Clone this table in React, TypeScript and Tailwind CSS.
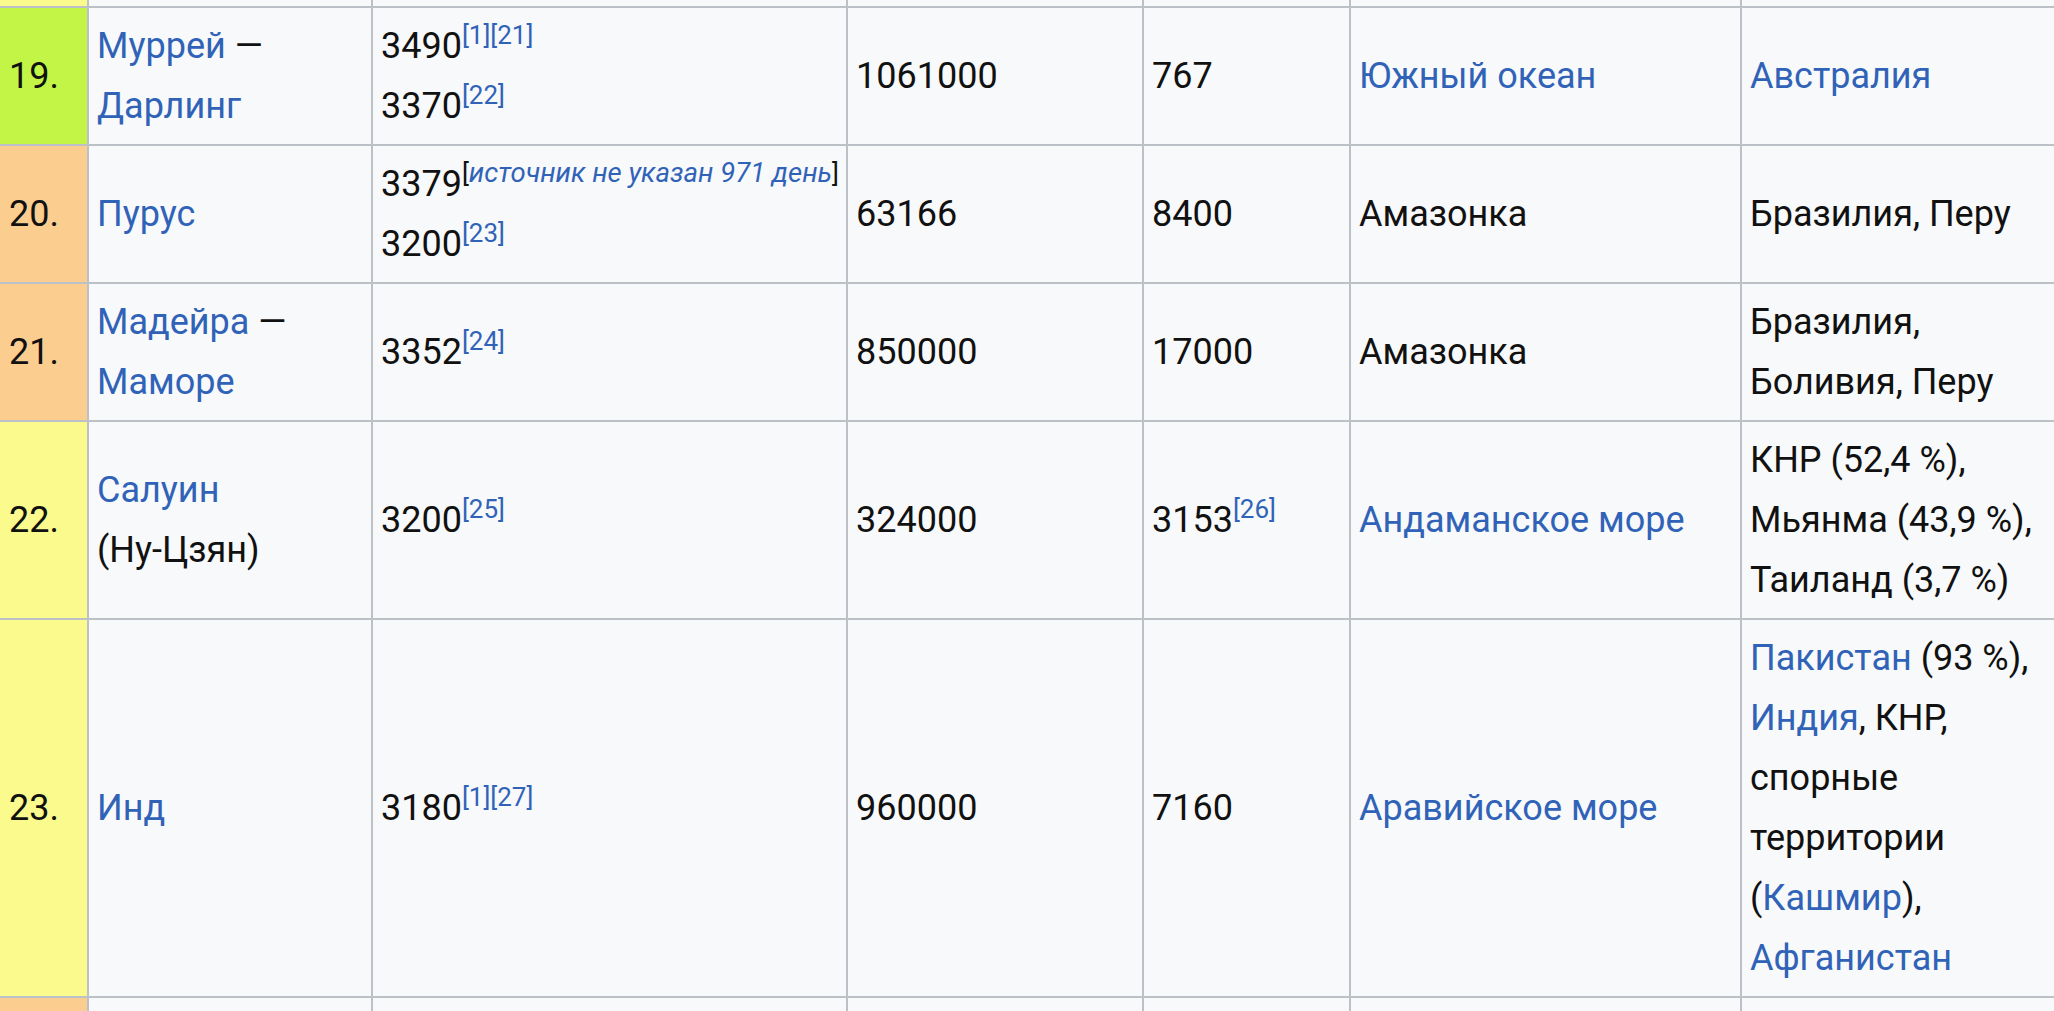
import { ReactNode } from "react"
import { twMerge } from "tailwind-merge"

// colours used by the wiki table for the continent column
const LIME = "bg-[#c2f545]"
const ORANGE = "bg-[#fbcd8e]"
const YELLOW = "bg-[#fbfa8c]"

function Cell({
  children,
  className,
}: {
  children?: ReactNode
  className?: string
}) {
  return (
    <div className={twMerge("flex items-center bg-[#f8f9fa] px-2 py-2", className)}>
      <div>{children}</div>
    </div>
  )
}

function WikiLink({ children }: { children: ReactNode }) {
  return <a className="text-[#3063b8]">{children}</a>
}

function Ref({ children }: { children: ReactNode }) {
  return <sup className="-top-[14px] text-[26px] text-[#3063b8]">{children}</sup>
}

function Num({ n, color }: { n: string; color: string }) {
  return <Cell className={twMerge("pl-[9px]", color)}>{n}</Cell>
}

export default function App() {
  return (
    <main className="h-screen w-full overflow-hidden bg-[#f8f9fa] font-[Roboto,sans-serif] text-[36px] leading-[60px] text-[#111]">
      <div className="grid w-max grid-cols-[87px_282px_473px_294px_205px_389px_320px] gap-[2px] bg-[#bcc1c8]">
        {/* tail of row 18, mostly scrolled out */}
        <div className={twMerge("h-[6px]", YELLOW)}></div>
        <div className="h-[6px] bg-[#f8f9fa]"></div>
        <div className="h-[6px] bg-[#f8f9fa]"></div>
        <div className="h-[6px] bg-[#f8f9fa]"></div>
        <div className="h-[6px] bg-[#f8f9fa]"></div>
        <div className="h-[6px] bg-[#f8f9fa]"></div>
        <div className="h-[6px] bg-[#f8f9fa]"></div>

        {/* 19 */}
        <Num n="19." color={LIME} />
        <Cell>
          <WikiLink>Муррей</WikiLink> — <WikiLink>Дарлинг</WikiLink>
        </Cell>
        <Cell>
          <div className="whitespace-nowrap">
            3490<Ref>[1][21]</Ref>
          </div>
          <div className="whitespace-nowrap">
            3370<Ref>[22]</Ref>
          </div>
        </Cell>
        <Cell>1061000</Cell>
        <Cell>767</Cell>
        <Cell>
          <WikiLink>Южный океан</WikiLink>
        </Cell>
        <Cell>
          <WikiLink>Австралия</WikiLink>
        </Cell>

        {/* 20 */}
        <Num n="20." color={ORANGE} />
        <Cell>
          <WikiLink>Пурус</WikiLink>
        </Cell>
        <Cell>
          <div className="whitespace-nowrap">
            3379
            <sup className="-top-[14px] text-[26px]">
              [<i className="text-[27.5px] text-[#3063b8]">источник не указан 971 день</i>]
            </sup>
          </div>
          <div className="whitespace-nowrap">
            3200<Ref>[23]</Ref>
          </div>
        </Cell>
        <Cell>63166</Cell>
        <Cell>8400</Cell>
        <Cell>Амазонка</Cell>
        <Cell>Бразилия, Перу</Cell>

        {/* 21 */}
        <Num n="21." color={ORANGE} />
        <Cell>
          <WikiLink>Мадейра</WikiLink> — <WikiLink>Маморе</WikiLink>
        </Cell>
        <Cell>
          <div className="whitespace-nowrap">
            3352<Ref>[24]</Ref>
          </div>
        </Cell>
        <Cell>850000</Cell>
        <Cell>17000</Cell>
        <Cell>Амазонка</Cell>
        <Cell>Бразилия, Боливия, Перу</Cell>

        {/* 22 */}
        <Num n="22." color={YELLOW} />
        <Cell>
          <WikiLink>Салуин</WikiLink> <span className="whitespace-nowrap">(Ну-Цзян)</span>
        </Cell>
        <Cell>
          <div className="whitespace-nowrap">
            3200<Ref>[25]</Ref>
          </div>
        </Cell>
        <Cell>324000</Cell>
        <Cell>
          <div className="whitespace-nowrap">
            3153<Ref>[26]</Ref>
          </div>
        </Cell>
        <Cell>
          <WikiLink>Андаманское море</WikiLink>
        </Cell>
        <Cell>КНР (52,4 %), Мьянма (43,9 %), Таиланд (3,7 %)</Cell>

        {/* 23 */}
        <Num n="23." color={YELLOW} />
        <Cell>
          <WikiLink>Инд</WikiLink>
        </Cell>
        <Cell>
          <div className="whitespace-nowrap">
            3180<Ref>[1][27]</Ref>
          </div>
        </Cell>
        <Cell>960000</Cell>
        <Cell>7160</Cell>
        <Cell>
          <WikiLink>Аравийское море</WikiLink>
        </Cell>
        <Cell>
          <WikiLink>Пакистан</WikiLink> (93 %), <WikiLink>Индия</WikiLink>, КНР,
          спорные территории (<WikiLink>Кашмир</WikiLink>),{" "}
          <WikiLink>Афганистан</WikiLink>
        </Cell>

        {/* 24, only its top edge shows */}
        <div className={twMerge("h-[60px]", ORANGE)}></div>
        <div className="h-[60px] bg-[#f8f9fa]"></div>
        <div className="h-[60px] bg-[#f8f9fa]"></div>
        <div className="h-[60px] bg-[#f8f9fa]"></div>
        <div className="h-[60px] bg-[#f8f9fa]"></div>
        <div className="h-[60px] bg-[#f8f9fa]"></div>
        <div className="h-[60px] bg-[#f8f9fa]"></div>
      </div>
    </main>
  )
}
